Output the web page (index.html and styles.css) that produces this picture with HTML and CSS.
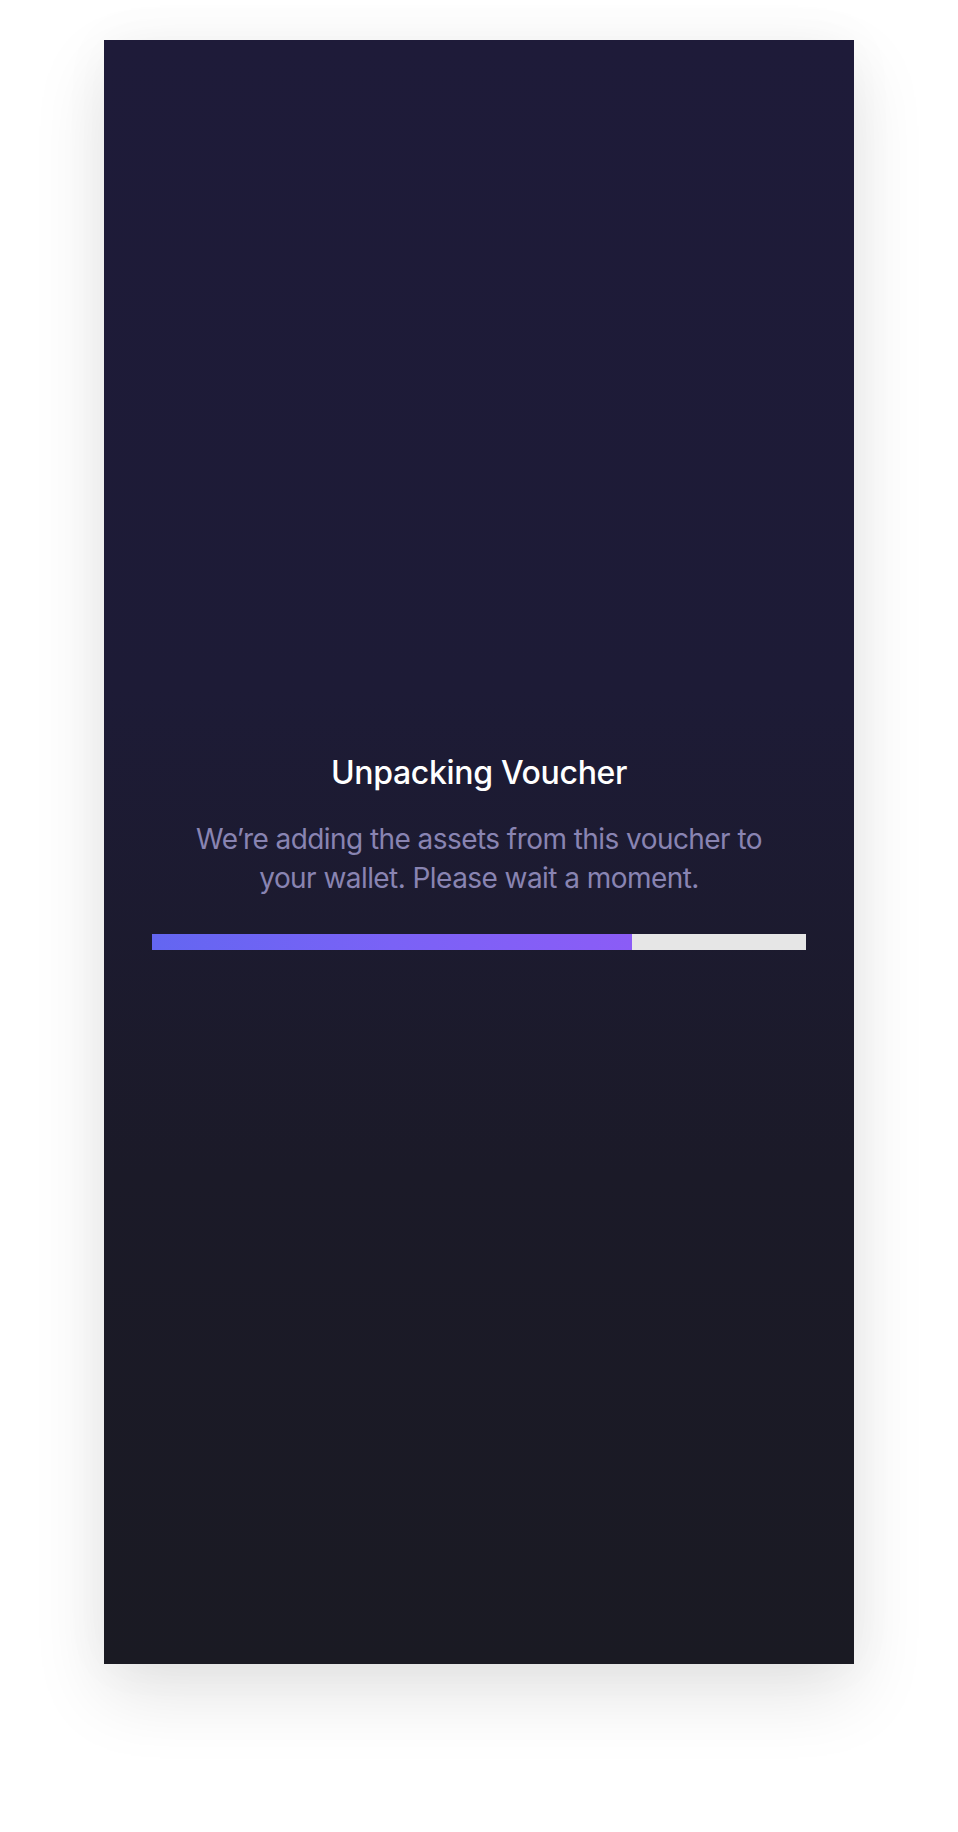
FILE: index.html
```html
<!DOCTYPE html>
<html lang="en">
<head>
<meta charset="utf-8">
<title>Unpacking Voucher</title>
<link rel="stylesheet" href="styles.css">
</head>
<body>
<main class="stage">
  <section class="card">
    <h1 class="title">Unpacking Voucher</h1>
    <p class="subtitle">We’re adding the assets from this voucher to your wallet. Please wait a moment.</p>
    <div class="progress">
      <div class="progress-fill" style="width: 73.4%"></div>
    </div>
  </section>
</main>
</body>
</html>
```

FILE: styles.css
```css
html, body {
  margin: 0;
  padding: 0;
  background: #ffffff;
}

body {
  font-family: Inter, "Noto Sans", "Liberation Sans", sans-serif;
  -webkit-font-smoothing: antialiased;
}

.stage {
  display: flex;
  justify-content: center;
  padding-top: 40px;
  height: 1832px;
  box-sizing: border-box;
}

.card {
  width: 750px;
  height: 1624px;
  box-sizing: border-box;
  padding: 0 48px 2px;
  display: flex;
  flex-direction: column;
  align-items: center;
  justify-content: center;
  background: linear-gradient(180deg, #1e1b39 0%, #1d1b36 40%, #1b1a28 70%, #1a1a23 100%);
  box-shadow: 0 30px 70px rgba(0, 0, 0, 0.11), 0 0 50px rgba(0, 0, 0, 0.035);
}

.title {
  margin: 0;
  font-size: 32px;
  line-height: 40px;
  font-weight: 500;
  color: #ffffff;
  letter-spacing: -0.01em;
  text-align: center;
}

.subtitle {
  margin: 27px 0 0;
  max-width: 600px;
  font-size: 28px;
  line-height: 39px;
  font-weight: 400;
  color: #8984b2;
  letter-spacing: -0.02em;
  text-align: center;
}

.progress {
  margin-top: 36px;
  width: 100%;
  height: 16px;
  background: #e6e6e6;
  display: flex;
}

.progress-fill {
  height: 100%;
  background: linear-gradient(90deg, #6366f1 0%, #7a62f6 50%, #8b5cf6 100%);
}
```
